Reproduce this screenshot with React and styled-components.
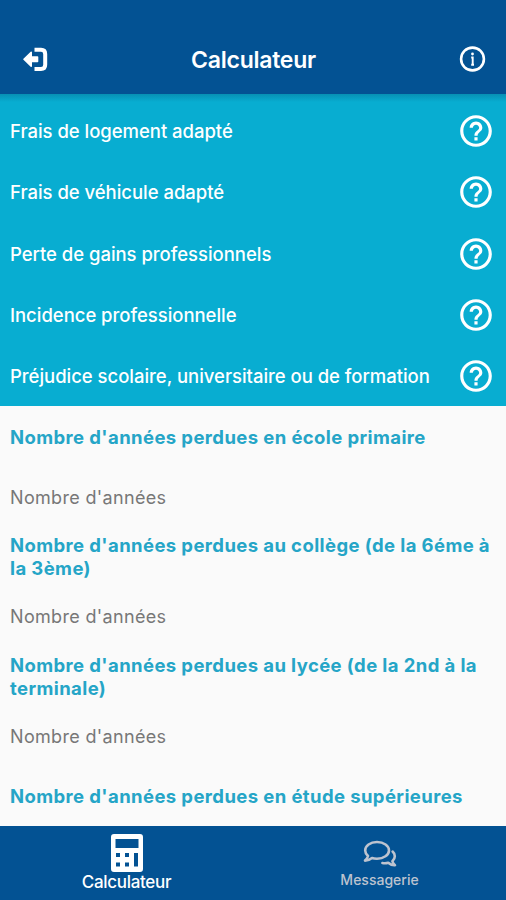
import { Fragment } from 'react'
import styled, { createGlobalStyle } from 'styled-components'
import { MdHelpOutline } from 'react-icons/md'

const GlobalStyle = createGlobalStyle`
  body {
    margin: 0;
    background-color: #fafafa;
    font-family: Inter, 'Liberation Sans', sans-serif;
  }
`

const Screen = styled.div`
  display: flex;
  flex-direction: column;
  height: 900px;
  overflow: hidden;
`

const Header = styled.header`
  display: flex;
  align-items: center;
  justify-content: space-between;
  box-sizing: border-box;
  height: 94px;
  padding: 25px 20px 0 22px;
  background-color: #035293;
  color: #fff;
  flex-shrink: 0;

  svg {
    display: block;
  }
`

const Title = styled.h1`
  margin: 0;
  font-size: 23px;
  font-weight: 600;
  letter-spacing: -0.25px;
  padding-right: 2px;
`

const Categories = styled.div`
  height: 306px;
  padding-top: 6.4px;
  background: linear-gradient(#0791b4, #08add1 8px);
  flex-shrink: 0;
`

const Category = styled.div`
  display: flex;
  align-items: center;
  justify-content: space-between;
  height: 61.25px;
  padding: 0 11px 0 10px;
  color: #fff;
  font-size: 18.5px;
  font-weight: 500;
  letter-spacing: -0.03px;
`

const Form = styled.div`
  flex: 1;
  min-height: 0;
  overflow: hidden;
  padding: 19.6px 10px 0;
`

const Label = styled.div`
  color: #25a5c7;
  font-size: 18.5px;
  font-weight: 700;
  line-height: 23px;
  letter-spacing: 0.4px;
  margin-bottom: ${(props) => (props.$spaced ? '37px' : '25.5px')};
`

const Field = styled.div`
  color: #777;
  font-size: 18px;
  line-height: 24px;
  letter-spacing: 0.33px;
  margin-bottom: ${(props) => props.$gap}px;
`

const TabBar = styled.nav`
  display: flex;
  height: 74px;
  background-color: #035293;
  flex-shrink: 0;
`

const Tab = styled.div`
  display: flex;
  flex: 1;
  flex-direction: column;
  align-items: center;
  justify-content: flex-end;
  box-sizing: border-box;
  padding-bottom: ${(props) => (props.$active ? '8px' : '10px')};
  color: ${(props) => (props.$active ? '#fff' : '#bdc3cf')};
  font-size: ${(props) => (props.$active ? '17px' : '14px')};
  font-weight: 500;
  line-height: 20px;
  letter-spacing: ${(props) => (props.$active ? '-0.3px' : '0')};
`

const categories = [
  'Frais de logement adapté',
  'Frais de véhicule adapté',
  'Perte de gains professionnels',
  'Incidence professionnelle',
  'Préjudice scolaire, universitaire ou de formation',
]

const questions = [
  { label: "Nombre d'années perdues en école primaire", spaced: true, gap: 24 },
  { label: "Nombre d'années perdues au collège (de la 6éme à la 3ème)", gap: 24.5 },
  { label: "Nombre d'années perdues au lycée (de la 2nd à la terminale)", gap: 35.5 },
]

function LogoutIcon() {
  return (
    <svg width="28" height="28" viewBox="0 0 28 28" fill="none">
      <path
        d="M12.5 3.8H19Q23.2 3.8 23.2 8V18.8Q23.2 23 19 23H12.5"
        stroke="#fff"
        strokeWidth="4"
      />
      <path
        d="M2 13.3L9.2 6.3V11.1H15.5V15.5H9.2V20.3Z"
        fill="#fff"
        stroke="#fff"
        strokeWidth="1.6"
        strokeLinejoin="round"
      />
    </svg>
  )
}

function InfoIcon() {
  return (
    <svg width="27" height="27" viewBox="0 0 27 27" fill="none" stroke="#fff">
      <circle cx="13.5" cy="13" r="11.4" strokeWidth="2.6" />
      <path d="M12.2 11.5H13.7V18.7M12.2 18.7H15" strokeWidth="1.9" />
      <circle cx="13.5" cy="8" r="1.4" fill="#fff" stroke="none" />
    </svg>
  )
}

function CalculatorIcon() {
  return (
    <svg width="32" height="38" viewBox="0 0 32 38">
      <path
        fill="#fff"
        fillRule="evenodd"
        d="M3 0H29Q32 0 32 3V35Q32 38 29 38H3Q0 38 0 35V3Q0 0 3 0ZM4.5 5V14H27.5V5ZM5 19V23H9V19ZM14 19V23H18V19ZM23 19V32.5H27V19ZM5 28.5V32.5H9V28.5ZM14 28.5V32.5H18V28.5Z"
      />
    </svg>
  )
}

function MessagesIcon() {
  return (
    <svg
      width="34"
      height="30"
      viewBox="0 0 34 30"
      fill="none"
      stroke="currentColor"
      strokeWidth="2.6"
      strokeLinejoin="round"
      strokeLinecap="round"
    >
      <path d="M5 16C3.2 14.2 2.2 12.4 2.2 10.4C2.2 5.8 7.2 2 14 2S26 5.8 26 10.4S20.6 18.7 14 18.7C12 18.7 10.4 18.5 9 18C7 19.7 4.8 20.6 2 20.6C3.6 19.2 4.6 17.7 5 16Z" />
      <path d="M29.6 11.6C31.2 13 31.8 14.4 31.8 16.2C31.8 18.2 31 19.8 29.4 21.2C29.8 22.8 30.6 24 32 25.2C29.4 25.4 27 24.4 25.2 22.8C23.4 23.3 21.4 23.4 19.4 23" />
    </svg>
  )
}

function App() {
  return (
    <Screen>
      <GlobalStyle />
      <Header>
        <LogoutIcon />
        <Title>Calculateur</Title>
        <InfoIcon />
      </Header>
      <Categories>
        {categories.map((name) => (
          <Category key={name}>
            {name}
            <MdHelpOutline size={38} />
          </Category>
        ))}
      </Categories>
      <Form>
        {questions.map(({ label, spaced, gap }) => (
          <Fragment key={label}>
            <Label $spaced={spaced}>{label}</Label>
            <Field $gap={gap}>Nombre d'années</Field>
          </Fragment>
        ))}
        <Label>Nombre d'années perdues en étude supérieures</Label>
      </Form>
      <TabBar>
        <Tab $active>
          <CalculatorIcon />
          Calculateur
        </Tab>
        <Tab>
          <MessagesIcon />
          Messagerie
        </Tab>
      </TabBar>
    </Screen>
  )
}

export default App
